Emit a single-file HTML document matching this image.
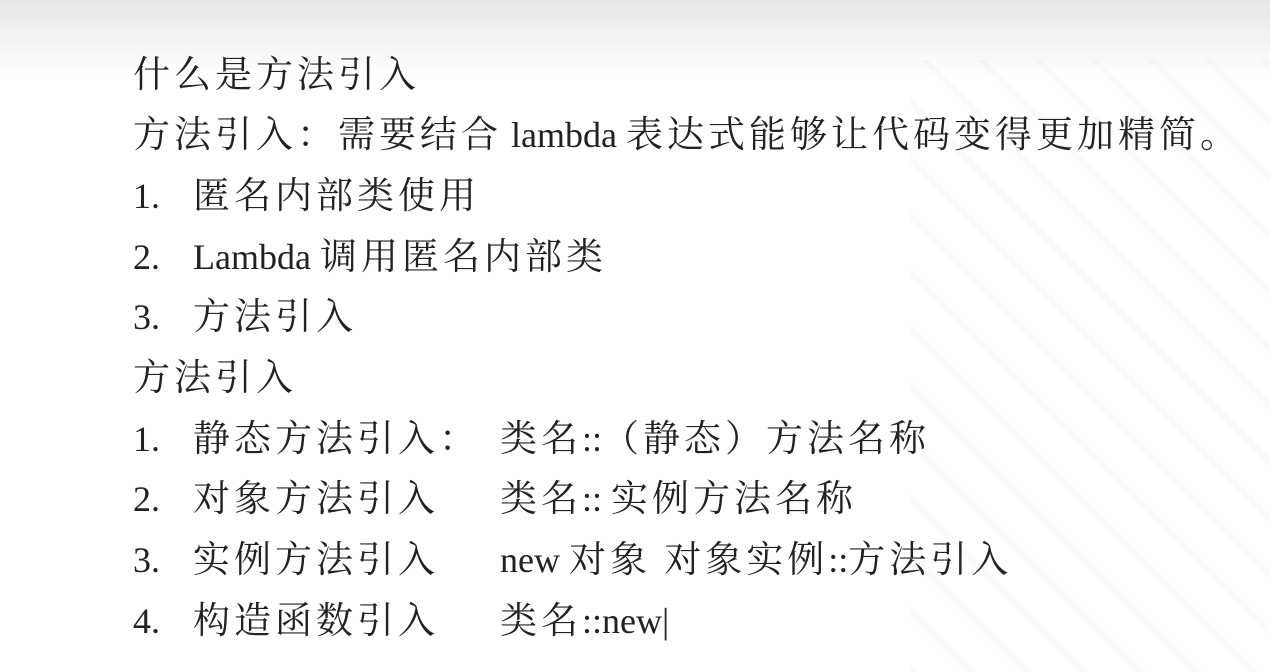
<!DOCTYPE html>
<html><head><meta charset="utf-8"><style>
html,body{margin:0;padding:0}
body{width:1270px;height:672px;overflow:hidden;position:relative;background:linear-gradient(#e6e6e6 0px,#f3f3f3 40px,#fff 75px,#fff);font-family:"Liberation Serif","Noto Serif CJK SC",serif;color:#222;}
.l{position:absolute;font-size:36px;line-height:44px;white-space:nowrap}
.c{letter-spacing:4px;font-size:37px}
.w{position:absolute;right:0;top:60px;width:360px;height:612px;opacity:.025;background:repeating-linear-gradient(45deg,#c00 0 6px,transparent 6px 40px)}
</style></head><body>
<div class="w"></div>
<div class="l" style="left:133px;top:53px"><span class="c">什么是方法引入</span></div>
<div class="l" style="left:133px;top:113px"><span class="c">方法引入：需要结合</span> lambda <span class="c">表达式能够让代码变得更加精简。</span></div>
<div class="l" style="left:133px;top:174px">1.</div><div class="l" style="left:193px;top:174px"><span class="c">匿名内部类使用</span></div>
<div class="l" style="left:133px;top:235px">2.</div><div class="l" style="left:193px;top:235px">Lambda <span class="c">调用匿名内部类</span></div>
<div class="l" style="left:133px;top:295px">3.</div><div class="l" style="left:193px;top:295px"><span class="c">方法引入</span></div>
<div class="l" style="left:133px;top:356px"><span class="c">方法引入</span></div>
<div class="l" style="left:133px;top:417px">1.</div><div class="l" style="left:193px;top:417px"><span class="c">静态方法引入：</span></div><div class="l" style="left:500px;top:417px"><span class="c">类名</span>::<span class="c">（静态）方法名称</span></div>
<div class="l" style="left:133px;top:477px">2.</div><div class="l" style="left:193px;top:477px"><span class="c">对象方法引入</span></div><div class="l" style="left:500px;top:477px"><span class="c">类名</span>:: <span class="c">实例方法名称</span></div>
<div class="l" style="left:133px;top:538px">3.</div><div class="l" style="left:193px;top:538px"><span class="c">实例方法引入</span></div><div class="l" style="left:500px;top:538px">new <span class="c">对象 对象实例</span>::<span class="c">方法引入</span></div>
<div class="l" style="left:133px;top:599px">4.</div><div class="l" style="left:193px;top:599px"><span class="c">构造函数引入</span></div><div class="l" style="left:500px;top:599px"><span class="c">类名</span>::new|</div>
</body></html>
